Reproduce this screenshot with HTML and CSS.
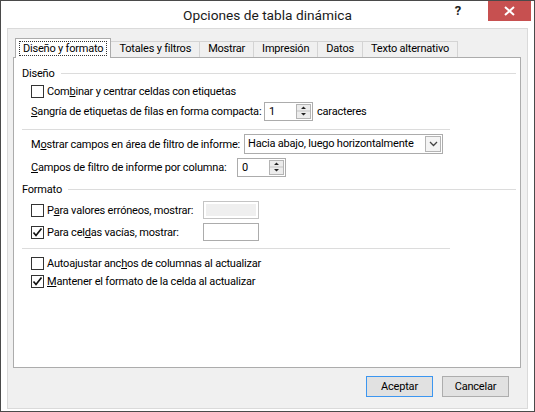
FILE: index.html
```html
<!DOCTYPE html>
<html lang="es">
<head>
    <meta charset="UTF-8">
    <title>Opciones de tabla dinámica</title>
    <link rel="stylesheet" href="styles.css">
</head>
<body>
    <div class="window">
        <!-- Barra de título -->
        <div class="titlebar">
            <div class="title">Opciones de tabla dinámica</div>
            <div class="caption">
                <span class="help">?</span>
                <span class="close">
                    <svg width="11" height="10" viewBox="0 0 11 10"><path d="M1 1 L10 9 M10 1 L1 9" stroke="#fff" stroke-width="2"/></svg>
                </span>
            </div>
        </div>

        <div class="client">
            <!-- Pestañas -->
            <div class="tabs">
                <div class="tab active"><span class="focus">Diseño y formato</span></div>
                <div class="tab">Totales y filtros</div>
                <div class="tab">Mostrar</div>
                <div class="tab">Impresión</div>
                <div class="tab">Datos</div>
                <div class="tab">Texto alternativo</div>
            </div>

            <div class="panel">
                <!-- Diseño -->
                <div class="group-title"><span>Diseño</span><span class="rule"></span></div>
                <div class="check-row indent row-combinar">
                    <span class="check"></span>
                    <span>Com<u>b</u>inar y centrar celdas con etiquetas</span>
                </div>
                <div class="field-row indent row-sangria">
                    <span class="lbl lbl-sangria"><u>S</u>angría de etiquetas de filas en forma compacta:</span>
                    <div class="spinner">
                        <span class="value">1</span>
                        <span class="spin">
                            <svg width="13" height="14" viewBox="0 0 13 14"><path d="M4 5 L6.5 2.5 L9 5 Z M4 9 L9 9 L6.5 11.5 Z" fill="#222"/><path d="M0 7 H13" stroke="#c4c4c4"/></svg>
                        </span>
                    </div>
                    <span>caracteres</span>
                </div>

                <div class="separator sep-1"></div>

                <div class="field-row indent row-mostrar">
                    <span class="lbl lbl-mostrar">M<u>o</u>strar campos en área de filtro de informe:</span>
                    <div class="select">
                        <span class="value">Hacia abajo, luego horizontalmente</span>
                        <span class="drop">
                            <svg width="9" height="6" viewBox="0 0 9 6"><path d="M1 1 L4.5 4.5 L8 1" fill="none" stroke="#444" stroke-width="1.3"/></svg>
                        </span>
                    </div>
                </div>
                <div class="field-row indent row-campos">
                    <span class="lbl lbl-campos"><u>C</u>ampos de filtro de informe por columna:</span>
                    <div class="spinner">
                        <span class="value">0</span>
                        <span class="spin">
                            <svg width="13" height="14" viewBox="0 0 13 14"><path d="M4 5 L6.5 2.5 L9 5 Z M4 9 L9 9 L6.5 11.5 Z" fill="#222"/><path d="M0 7 H13" stroke="#c4c4c4"/></svg>
                        </span>
                    </div>
                </div>

                <!-- Formato -->
                <div class="group-title group-formato"><span>Formato</span><span class="rule"></span></div>
                <div class="format-grid indent">
                    <div class="check-row">
                        <span class="check"></span>
                        <span>P<u>a</u>ra valores erróneos, mostrar:</span>
                    </div>
                    <div class="textbox disabled"></div>
                    <div class="check-row">
                        <span class="check checked">
                            <svg width="11" height="11" viewBox="0 0 11 11"><path d="M1.5 5.5 L4 8.5 L9.5 1.5" fill="none" stroke="#111" stroke-width="1.7"/></svg>
                        </span>
                        <span>Para cel<u>d</u>as vacías, mostrar:</span>
                    </div>
                    <div class="textbox"></div>
                </div>

                <div class="separator sep-2"></div>

                <div class="check-row indent row-auto">
                    <span class="check"></span>
                    <span>Autoajustar anc<u>h</u>os de columnas al actualizar</span>
                </div>
                <div class="check-row indent row-mantener">
                    <span class="check checked">
                        <svg width="11" height="11" viewBox="0 0 11 11"><path d="M1.5 5.5 L4 8.5 L9.5 1.5" fill="none" stroke="#111" stroke-width="1.7"/></svg>
                    </span>
                    <span><u>M</u>antener el formato de la celda al actualizar</span>
                </div>
            </div>

            <!-- Botones -->
            <div class="buttons">
                <button class="btn default">Aceptar</button>
                <button class="btn">Cancelar</button>
            </div>
        </div>
    </div>
</body>
</html>
```

FILE: styles.css
```css
* { box-sizing: border-box; }
body {
    margin: 0;
    font-family: Roboto, "Liberation Sans", Arial, sans-serif;
    font-size: 11px;
    letter-spacing: -0.2px;
    color: #000;
    background: #fff;
}
u { text-underline-offset: 1px; }

.window {
    width: 535px;
    height: 412px;
    border: 1px solid #4a4a4a;
    background: #fff;
    display: flex;
    flex-direction: column;
}

/* Barra de título */
.titlebar {
    height: 27px;
    display: grid;
    grid-template-columns: 1fr auto 1fr;
}
.title {
    grid-column: 2;
    font-size: 13.7px;
    letter-spacing: 0;
    line-height: 28px;
    color: #1a1a1a;
}
.caption {
    grid-column: 3;
    justify-self: end;
    display: flex;
    align-items: flex-start;
}
.help {
    font-weight: bold;
    font-size: 13px;
    margin-top: 2px;
    margin-right: 27px;
    color: #222;
}
.close {
    width: 43px;
    height: 20px;
    margin-right: 3px;
    background: #c75050;
    display: flex;
    align-items: center;
    justify-content: center;
}

/* Área cliente */
.client {
    flex: 1;
    margin: 0 6px 2px;
    border: 1px solid #dadada;
    background: #f0f0f0;
    padding: 9px 6px 0 5px;
    display: flex;
    flex-direction: column;
}

/* Pestañas */
.tabs {
    display: flex;
    align-items: flex-end;
    height: 20px;
    margin-bottom: -1px;
    padding-left: 2px;
    position: relative;
    z-index: 1;
}
.tab {
    height: 16px;
    margin-bottom: 1px;
    padding: 0 8px;
    line-height: 14px;
    border: 1px solid #d4d4d4;
    border-bottom: none;
    border-left: none;
    background: #f0f0f0;
    white-space: nowrap;
}
.tab.active {
    height: 20px;
    margin-bottom: 0;
    padding: 2px 3px 0;
    border: 1px solid #acacac;
    border-bottom: none;
    background: #fff;
}
.focus {
    display: block;
    border: 1px dotted #333;
    padding: 0 3px;
    line-height: 13px;
}

.panel {
    height: 311px;
    border: 1px solid #acacac;
    background: #fff;
    padding: 0 4px 0 8px;
}

.group-title {
    display: flex;
    align-items: center;
    height: 16px;
    margin-top: 7px;
}
.group-title .rule {
    flex: 1;
    height: 1px;
    margin-left: 6px;
    background: #dcdcdc;
}
.group-formato { margin-top: 4px; }

.indent { margin-left: 9px; }

.check-row {
    display: flex;
    align-items: center;
    gap: 3px;
    height: 16px;
    white-space: nowrap;
}
.check {
    width: 13px;
    height: 13px;
    border: 1px solid #333;
    background: #fff;
    display: flex;
    align-items: center;
    justify-content: center;
}

.field-row {
    display: flex;
    align-items: center;
    height: 20px;
    white-space: nowrap;
}
.lbl-sangria { width: 233px; }
.lbl-mostrar { width: 213px; }
.lbl-campos { width: 206px; }
.row-sangria .spinner { margin-right: 4px; }

.row-combinar { margin-top: 2px; }
.row-sangria { margin-top: 2px; }
.row-mostrar { margin-top: 4px; }
.row-campos { margin-top: 3px; }
.row-auto { margin-top: 6px; }
.row-mantener { margin-top: 2px; }

.separator {
    width: 428px;
    height: 1px;
    background: #dcdcdc;
}
.sep-1 { margin-top: 8px; }
.sep-2 { margin-top: 7px; }

/* Controles */
.spinner {
    display: flex;
    align-items: center;
    width: 49px;
    height: 19px;
    border: 1px solid #acacac;
    background: #fff;
    padding: 0 1px 0 4px;
}
.spinner .value { flex: 1; }
.spin {
    width: 15px;
    height: 15px;
    border: 1px solid #b4b4b4;
    background: #ececec;
    display: flex;
    align-items: center;
    justify-content: center;
}

.select {
    display: flex;
    width: 199px;
    height: 20px;
    border: 1px solid #acacac;
    background: #fff;
    padding: 1px;
}
.select .value {
    flex: 1;
    padding-left: 2px;
    line-height: 16px;
}
.select .drop {
    width: 16px;
    border: 1px solid #b4b4b4;
    background: #f4f4f4;
    display: flex;
    align-items: center;
    justify-content: center;
}

.format-grid {
    display: grid;
    grid-template-columns: 172px 56px;
    row-gap: 4px;
    margin-top: 4px;
    align-items: center;
}
.format-grid .check-row { height: 18px; }
.textbox {
    height: 18px;
    border: 1px solid #acacac;
    background: #fff;
}
.textbox.disabled {
    border-color: #c4c4c4;
    background: #efefef;
    box-shadow: inset 0 0 0 2px #fff;
}

/* Botones */
.buttons {
    display: flex;
    justify-content: flex-end;
    gap: 9px;
    margin-top: 8px;
    padding-right: 12px;
}
.btn {
    width: 67px;
    height: 21px;
    padding: 0;
    font-family: inherit;
    font-size: 11px;
    letter-spacing: -0.2px;
    color: #000;
    background: #e1e1e1;
    border: 1px solid #adadad;
}
.btn.default { border-color: #3c96f0; }
```
